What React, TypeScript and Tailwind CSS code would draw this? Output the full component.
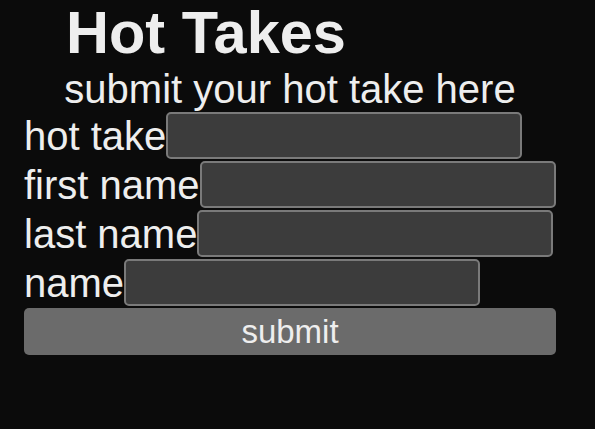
export default function App() {
  const fields = ["hot take", "first name", "last name", "name"];

  return (
    <div className="min-h-screen bg-[#0b0b0b] text-[#eeeeee] font-['Liberation_Sans',Arial,sans-serif]">
      <div className="ml-[24px] w-[532px]">
        <h1 className="pl-[42px] text-[59.5px] font-bold leading-[66px]">Hot Takes</h1>
        <p className="text-center text-[40px] leading-[46px]">submit your hot take here</p>
        <form className="flex flex-col gap-[2px]" onSubmit={(e) => e.preventDefault()}>
          {fields.map((f) => (
            <label key={f} className="flex items-center">
              <span className="text-[40px] leading-[46px] whitespace-nowrap">{f}</span>
              <input
                type="text"
                className="h-[47px] w-[356px] shrink-0 rounded-[5px] border-2 border-[#7a7a7a] bg-[#3c3c3c] outline-none"
              />
            </label>
          ))}
          <button
            type="submit"
            className="h-[47px] w-full rounded-[5px] bg-[#6b6b6b] text-[33px] leading-[normal] text-[#eeeeee]"
          >
            submit
          </button>
        </form>
      </div>
    </div>
  );
}
